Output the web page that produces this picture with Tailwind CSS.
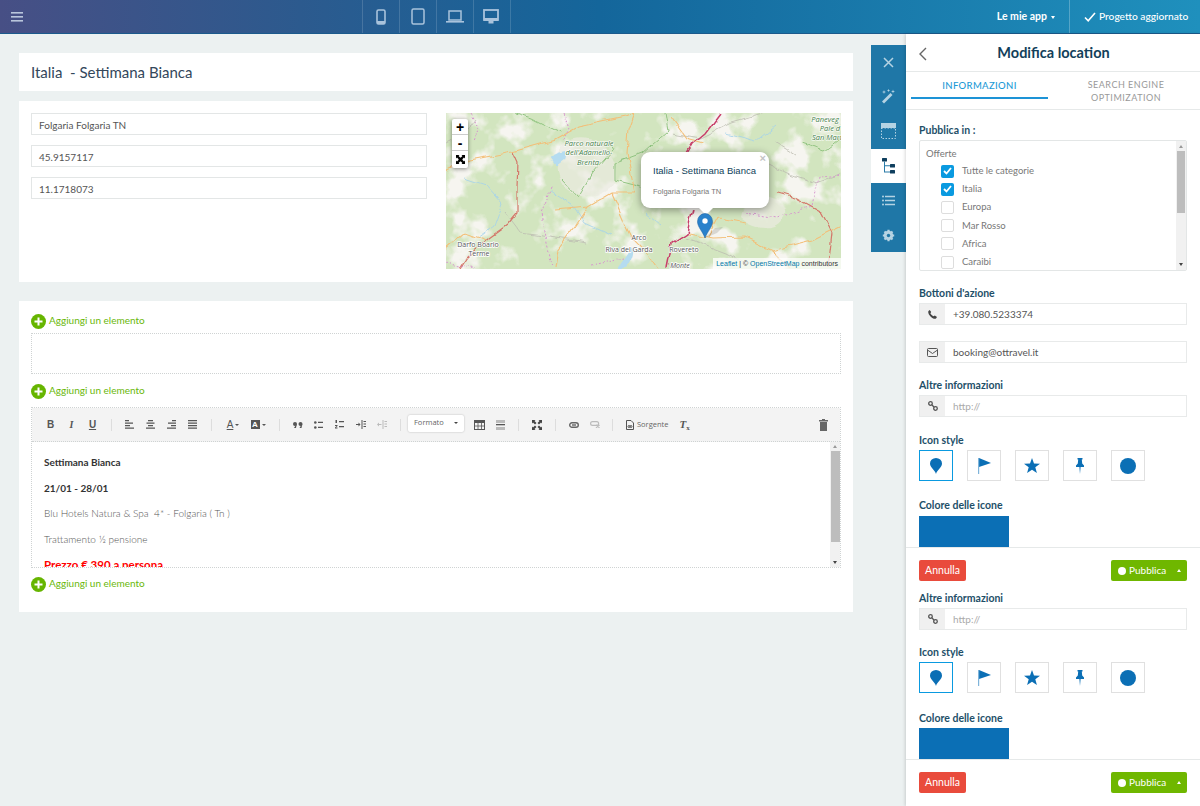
<!DOCTYPE html>
<html lang="it">
<head>
<meta charset="UTF-8">
<title>Modifica location</title>
<script src="https://cdn.jsdelivr.net/npm/@tailwindcss/browser@4"></script>
</head>
<body class="w-[1200px] h-[806px] overflow-hidden flex flex-col bg-[#ecf1f1] font-['Lato',sans-serif] text-[11px] text-[#555]">

<!-- top bar -->
<header class="h-[34px] shrink-0 flex items-stretch bg-[linear-gradient(90deg,#474f85,#2c5a8e_25%,#14669b_50%,#1f90bd)] border-b border-[#1b5a8c] text-white">
  <button class="w-[33px] pl-[11px] flex items-center">
    <svg width="12" height="10" viewBox="0 0 12 10" fill="#b9c6dc"><rect width="12" height="1.6"/><rect y="4" width="12" height="1.6"/><rect y="8" width="12" height="1.6"/></svg>
  </button>
  <div class="ml-[329px] flex border-l border-white/15">
    <div class="w-[37px] border-r border-white/15 flex items-center justify-center">
      <svg width="10" height="16" viewBox="0 0 10 16"><rect x="1" y="1" width="8" height="14" rx="1.5" fill="none" stroke="#a9c3dc" stroke-width="1.6"/><rect x="1" y="12" width="8" height="3" fill="#a9c3dc"/></svg>
    </div>
    <div class="w-[37px] border-r border-white/15 flex items-center justify-center">
      <svg width="14" height="17" viewBox="0 0 14 17"><rect x="1" y="1" width="12" height="15" rx="1.5" fill="none" stroke="#a9c3dc" stroke-width="1.5"/></svg>
    </div>
    <div class="w-[37px] border-r border-white/15 flex items-center justify-center">
      <svg width="18" height="13" viewBox="0 0 18 13"><rect x="3" y="1" width="12" height="9" fill="none" stroke="#a9c3dc" stroke-width="1.5"/><rect y="11" width="18" height="1.6" fill="#a9c3dc"/></svg>
    </div>
    <div class="w-[37px] border-r border-white/15 flex items-center justify-center pr-[2px]">
      <svg width="16" height="15" viewBox="0 0 16 15"><rect x="1" y="1" width="14" height="10" fill="none" stroke="#a9c3dc" stroke-width="1.8"/><rect x="1" y="9" width="14" height="3" fill="#a9c3dc"/><rect x="5.5" y="12" width="5" height="2.5" fill="#a9c3dc"/></svg>
    </div>
  </div>
  <div class="ml-auto flex items-center text-[10.500px] font-bold gap-[4px] pr-[14px]">
    Le mie app <span class="border-x-[2.5px] border-x-transparent border-t-[3px] border-t-white mt-px"></span>
  </div>
  <div class="w-[131px] border-l border-white/25 flex items-center pl-[14px] gap-[3px] text-[10.200px] font-medium whitespace-nowrap">
    <svg width="12" height="10" viewBox="0 0 12 10" fill="none" stroke="#fff" stroke-width="1.6"><path d="M1 5.5 4.2 8.8 11 1"/></svg>
    Progetto aggiornato
  </div>
</header>

<div class="flex-1 flex min-h-0">
  <!-- page column -->
  <main class="w-[871px] shrink-0 pl-[19px] pr-[18px] pt-[19px]">
    <div class="bg-white h-[38px] flex items-center px-[12px] text-[15px] text-[#33475b] whitespace-pre">Italia  - Settimana Bianca</div>

    <section class="bg-white mt-[10px] h-[181px] px-[12px] pt-[12px] flex">
      <div class="w-[396px] flex flex-col gap-[10px]">
        <div class="h-[22px] border border-[#e3e6e6] px-[7px] pt-[2px] flex items-center text-[10px] text-[#555]">Folgaria Folgaria TN</div>
        <div class="h-[22px] border border-[#e3e6e6] px-[7px] pt-[2px] flex items-center text-[10px] text-[#555]">45.9157117</div>
        <div class="h-[22px] border border-[#e3e6e6] px-[7px] pt-[2px] flex items-center text-[10px] text-[#555]">11.1718073</div>
      </div>
      <div class="relative ml-[19px] w-[395px] h-[156px] overflow-hidden bg-[#e4ead8]">
        <svg class="absolute inset-0" width="395" height="156" viewBox="0 0 395 156">
          <defs>
            <filter id="terrain" x="0" y="0" width="100%" height="100%">
              <feTurbulence type="fractalNoise" baseFrequency=".03" numOctaves="4" seed="7"/>
              <feColorMatrix type="matrix" values="0 0 0 0 .925  0 0 0 0 .915  0 0 0 0 .875  6 0 0 0 -3.100"/>
            </filter>
            <filter id="wiggle" x="-5%" y="-5%" width="110%" height="110%">
              <feTurbulence type="fractalNoise" baseFrequency=".07" numOctaves="2" seed="3" result="n"/>
              <feDisplacementMap in="SourceGraphic" in2="n" scale="7" xChannelSelector="R" yChannelSelector="G"/>
              <feGaussianBlur stdDeviation=".25"/>
            </filter>
          </defs>
          <rect width="395" height="156" fill="#d2e5bf"/>
          <rect width="395" height="156" filter="url(#terrain)"/>
          <g filter="url(#wiggle)">
            <g fill="#ecebe1" opacity=".7">
              <path d="M116 30C135 20 160 25 168 50S160 85 135 82 108 55 116 30Z"/>
              <path d="M300 85C320 78 345 88 338 105S305 115 295 105Z"/>
            </g>
            <g fill="#b5dcf0">
              <path d="M104 44 112 40 120 38 118 46 110 52Z"/>
              <path d="M186 134C189 140 186 148 180 156H172C177 148 182 142 186 134Z"/>
            </g>
            <g fill="none" stroke="#a3d2ec" stroke-width=".8">
              <path d="M18 65 40 72 56 90 48 112 30 125"/>
              <path d="M104 78 126 92 138 110 165 122"/>
              <path d="M280 20 310 28 330 12"/>
              <path d="M200 100 215 112"/>
            </g>
            <g fill="none" stroke="#bcbcb1" stroke-width=".8">
              <path d="M60 100 75 120 110 125 140 130"/>
              <path d="M225 20 255 25 285 10 320 0"/>
              <path d="M240 125 280 140 310 156"/>
              <path d="M300 40 340 60 370 70 395 60"/>
              <path d="M0 30 20 20 30 5"/>
              <path d="M330 30 350 42"/>
            </g>
            <g fill="none" stroke="#92c482" stroke-width="1">
              <path d="M219 0 222 17 196 40 169 50 169 67 196 74"/>
              <path d="M116 67 132 84 146 60 166 37 162 30"/>
              <path d="M115 20 85 5 70 0"/>
              <path d="M355 30 378 38 395 25"/>
            </g>
            <g fill="none" stroke="#f3bf78" stroke-width="1.100">
              <path d="M0 58 24 47 66 39 109 27 132 14 179 4 189 0"/>
              <path d="M109 97 142 94 166 80 189 80 181 40 183 17 189 0"/>
              <path d="M142 94 129 114 112 137 109 156"/>
              <path d="M166 80 179 110 186 124 199 137 212 156"/>
              <path d="M242 120 266 125 299 124 326 137 366 127 396 112"/>
              <path d="M262 124 272 105 300 110"/>
              <path d="M225 4 240 25 258 30"/>
              <path d="M345 156 326 137"/>
              <path d="M0 135 18 120 40 128"/>
            </g>
            <g fill="none" stroke="#d4776a" stroke-width="1.200">
              <path d="M67 39 72 50 71 74 71 100 61 112 43 125 22 144 14 156"/>
              <path d="M332 80 349 85 376 100 386 120 382 155"/>
            </g>
            <path d="M274 0 259 20 247 30 241 40M247 95 241 120 226 130 221 155" fill="none" stroke="#c83f6a" stroke-width="1.500"/>
            <g fill="none" stroke="#d795cf" stroke-width="1" stroke-dasharray="2 2">
              <path d="M118 0 124 15 116 28"/>
              <path d="M105 75 95 100 100 130 106 156"/>
              <path d="M301 100 332 105 366 94 372 64 396 62"/>
              <path d="M0 150 28 156"/>
              <path d="M145 152 178 146"/>
              <path d="M25 0 33 14 28 28"/>
            </g>
          </g>
          <g font-family="'Open Sans',sans-serif" font-size="7" fill="#555" text-anchor="middle" stroke="#ffffff" stroke-width="1.500" paint-order="stroke">
            <text x="32" y="134">Darfo Boario</text>
            <text x="33" y="143">Terme</text>
            <text x="193" y="127">Arco</text>
            <text x="183" y="139">Riva del Garda</text>
            <text x="238" y="139">Rovereto</text>
            <text x="234" y="155" font-style="italic">Monte</text>
          </g>
          <g font-family="'Open Sans',sans-serif" font-size="7.5" fill="#3f7d45" font-style="italic" text-anchor="middle" stroke="#ffffff" stroke-width="1.200" paint-order="stroke">
            <text x="143" y="33">Parco naturale</text>
            <text x="143" y="42">dell'Adamello-</text>
            <text x="142" y="52">Brenta</text>
            <text x="379" y="9">Paneveg</text>
            <text x="384" y="18">Pale d</text>
            <text x="381" y="27">San Mart</text>
          </g>
        </svg>

        <!-- zoom controls -->
        <div class="absolute left-[6px] top-[6px] w-[16px] bg-white rounded-[2px] shadow-[0_1px_4px_rgba(0,0,0,.45)] flex flex-col font-['Liberation_Sans',sans-serif]">
          <div class="h-[16px] flex items-center justify-center border-b border-[#ccc] font-bold text-[14px] leading-none text-black">+</div>
          <div class="h-[16px] flex items-center justify-center border-b border-[#ccc] font-bold text-[14px] leading-none text-black">-</div>
          <div class="h-[17px] flex items-center justify-center">
            <svg width="9" height="9" viewBox="0 0 9 9"><path d="M0 0H3.5L2.6 1 4.5 3 6.4 1 5.5 0H9V3.500L8 2.600 6 4.500 8 6.400 9 5.500V9H5.500L6.400 8 4.500 6 2.600 8 3.500 9H0V5.500L1 6.400 3 4.500 1 2.600 0 3.500Z" fill="#000"/><rect x="2.700" y="2.700" width="3.600" height="3.600" fill="#000"/></svg>
          </div>
        </div>

        <!-- popup and marker -->
        <div class="absolute left-[195px] top-[39px] w-[128px] h-[56px] bg-white rounded-[9px] shadow-[0_2px_8px_rgba(0,0,0,.4)] px-[12px] pt-[12px] font-['Liberation_Sans',sans-serif]">
          <span class="absolute right-[3px] top-[1px] text-[#c3c3c3] text-[11px] font-bold leading-none">×</span>
          <div class="text-[9.500px] leading-[14px] text-[#0f3f5a] whitespace-nowrap">Italia - Settimana Bianca</div>
          <div class="text-[7.500px] leading-[10px] mt-[9px] text-[#777] whitespace-nowrap">Folgaria Folgaria TN</div>
        </div>
        <div class="absolute left-[253px] top-[95px] w-0 h-0 border-x-[7px] border-x-transparent border-t-[7px] border-t-white"></div>
        <svg class="absolute left-[249px] top-[100px]" width="30" height="26" viewBox="0 0 30 26">
          <path d="M10 25 20 15 28 14 22 20Z" fill="#000" opacity=".12"/>
          <path d="M10 25C8 19 2.500 14 2.500 8.500A7.500 8 0 0 1 17.500 8.500C17.500 14 12 19 10 25Z" fill="#2a81cb" stroke="#2368a6" stroke-width=".6"/>
          <circle cx="10" cy="8" r="2.700" fill="#fff"/>
        </svg>

        <div class="absolute right-0 bottom-0 h-[11px] px-[3px] bg-white/75 text-[7px] leading-[11px] text-[#333] whitespace-nowrap font-['Liberation_Sans',sans-serif]">
          <span class="text-[#0078a8]">Leaflet</span> | © <span class="text-[#0078a8]">OpenStreetMap</span> contributors
        </div>
      </div>
    </section>

    <section class="bg-white mt-[19px] h-[311px] px-[12px] pt-[12px]">
      <div class="h-[16px] flex items-center gap-[3px] text-[#6ab80a] text-[10px]">
        <svg width="15" height="15" viewBox="0 0 15 15"><circle cx="7.500" cy="7.500" r="7.500" fill="#66b500"/><path d="M7.500 3.500V11.500M3.500 7.500H11.500" stroke="#fff" stroke-width="2"/></svg>
        <span class="pb-px">Aggiungi un elemento</span>
      </div>
      <div class="mt-[4px] h-[41px] border border-dotted border-[#cfd3d3]"></div>
      <div class="mt-[9px] h-[16px] flex items-center gap-[3px] text-[#6ab80a] text-[10px]">
        <svg width="15" height="15" viewBox="0 0 15 15"><circle cx="7.500" cy="7.500" r="7.500" fill="#66b500"/><path d="M7.500 3.500V11.500M3.500 7.500H11.500" stroke="#fff" stroke-width="2"/></svg>
        <span class="pb-px">Aggiungi un elemento</span>
      </div>

      <!-- text editor -->
      <div class="mt-[8px] h-[161px] border border-dotted border-[#cfd3d3] flex flex-col">
        <div class="h-[34px] shrink-0 bg-[#f3f3f3] border-b border-dotted border-[#cfd3d3] flex items-center pl-[8px] pr-[12px] text-[#555]">
          <span class="w-[21px] text-center font-bold text-[10px] font-['Liberation_Sans',sans-serif]">B</span>
          <span class="w-[21px] text-center font-bold italic text-[10px] font-['Liberation_Serif',serif]">I</span>
          <span class="w-[21px] text-center font-bold underline text-[10px] font-['Liberation_Sans',sans-serif]">U</span>
          <span class="w-[16px] flex justify-center"><i class="block w-px h-[12px] bg-[#ddd]"></i></span>
          <span class="w-[21px] flex justify-center"><svg width="9" height="9" viewBox="0 0 9 9" fill="#555"><path d="M0 0H4V1.300H0ZM0 2.500H8V3.800H0ZM0 5H5V6.300H0ZM0 7.500H9V8.800H0Z"/></svg></span>
          <span class="w-[21px] flex justify-center"><svg width="9" height="9" viewBox="0 0 9 9" fill="#555"><path d="M2 0H7V1.300H2ZM.5 2.500H8.500V3.800H.5ZM2 5H7V6.300H2ZM0 7.500H9V8.800H0Z"/></svg></span>
          <span class="w-[21px] flex justify-center"><svg width="9" height="9" viewBox="0 0 9 9" fill="#555"><path d="M5 0H9V1.300H5ZM1 2.500H9V3.800H1ZM4 5H9V6.300H4ZM0 7.500H9V8.800H0Z"/></svg></span>
          <span class="w-[21px] flex justify-center"><svg width="9" height="9" viewBox="0 0 9 9" fill="#555"><path d="M0 0H9V1.300H0ZM0 2.500H9V3.800H0ZM0 5H9V6.300H0ZM0 7.500H9V8.800H0Z"/></svg></span>
          <span class="w-[16px] flex justify-center"><i class="block w-px h-[12px] bg-[#ddd]"></i></span>
          <span class="w-[26px] flex items-center justify-center gap-[2px] pl-[2px]"><span class="text-[10px] leading-[10px] underline font-['Liberation_Sans',sans-serif]">A</span><i class="border-x-[2px] border-x-transparent border-t-[2px] border-t-[#555]"></i></span>
          <span class="w-[26px] flex items-center justify-center gap-[2px]"><span class="w-[9px] h-[9px] bg-[#555] text-white text-[8px] leading-[9px] text-center font-bold font-['Liberation_Sans',sans-serif]">A</span><i class="border-x-[2px] border-x-transparent border-t-[2px] border-t-[#555]"></i></span>
          <span class="w-[16px] flex justify-center"><i class="block w-px h-[12px] bg-[#ddd]"></i></span>
          <span class="w-[21px] flex justify-center"><svg width="10" height="6" viewBox="0 0 10 6" fill="#555"><circle cx="2" cy="2" r="2"/><path d="M2.500 3.500 3.800 2 3 6 1 6Z"/><circle cx="7.500" cy="2" r="2"/><path d="M8 3.500 9.300 2 8.500 6 6.500 6Z"/></svg></span>
          <span class="w-[21px] flex justify-center"><svg width="9" height="8" viewBox="0 0 9 8" fill="#555"><circle cx="1.300" cy="1.500" r="1.300"/><circle cx="1.300" cy="6.500" r="1.300"/><path d="M4 .8H9V2.100H4ZM4 5.800H9V7.100H4Z"/></svg></span>
          <span class="w-[21px] flex justify-center"><svg width="9" height="9" viewBox="0 0 9 9" fill="#555"><path d="M.5 0H2V3H.5ZM0 5H2.500V6L1 7.500H2.500V8.500H0V7.500L1.500 6H0ZM4 1H9V2.300H4ZM4 6H9V7.300H4Z"/></svg></span>
          <span class="w-[21px] flex justify-center"><svg width="10" height="9" viewBox="0 0 10 9" fill="#555"><path d="M5.500 0H6.500V9H5.500ZM7.500 1H10V2H7.500ZM7.500 3.500H10V4.500H7.500ZM7.500 6H10V7H7.500ZM0 4H2.500V2.500L4.500 4.500 2.500 6.500V5H0Z"/></svg></span>
          <span class="w-[21px] flex justify-center"><svg width="10" height="9" viewBox="0 0 10 9" fill="#bbb"><path d="M5.500 0H6.500V9H5.500ZM7.500 1H10V2H7.500ZM7.500 3.500H10V4.500H7.500ZM7.500 6H10V7H7.500ZM4.500 4H2V2.500L0 4.500 2 6.500V5H4.500Z"/></svg></span>
          <span class="w-[16px] flex justify-center"><i class="block w-px h-[12px] bg-[#ddd]"></i></span>
          <span class="w-[56px] h-[17px] mt-[-3px] bg-white rounded-[2px] shadow-[0_0_2px_rgba(0,0,0,.25)] flex items-center justify-between px-[6px] text-[7.500px] text-[#666] font-['Open_Sans',sans-serif]">Formato<i class="border-x-[2px] border-x-transparent border-t-[2px] border-t-[#444]"></i></span>
          <span class="w-[21px] ml-[5px] flex justify-center"><svg width="11" height="10" viewBox="0 0 11 10"><rect x=".5" y=".5" width="10" height="9" fill="none" stroke="#555"/><rect width="11" height="3" fill="#555"/><path d="M0 6H11M4 3V10M7.500 3V10" stroke="#555" stroke-width=".8"/></svg></span>
          <span class="w-[21px] flex justify-center"><svg width="9" height="10" viewBox="0 0 9 10"><rect width="9" height="3" fill="#bbb"/><rect y="4" width="9" height="1.300" fill="#555"/><rect y="7" width="9" height="3" fill="#bbb"/></svg></span>
          <span class="w-[15px] flex justify-center"><i class="block w-px h-[12px] bg-[#ddd]"></i></span>
          <span class="w-[22px] flex justify-center"><svg width="10" height="10" viewBox="0 0 10 10" fill="#444"><path d="M0 0H3.500L2.500 1 4.500 3 3 4.500 1 2.500 0 3.500ZM10 0V3.500L9 2.500 7 4.500 5.500 3 7.500 1 6.500 0ZM0 10V6.500L1 7.500 3 5.500 4.500 7 2.500 9 3.500 10ZM10 10H6.500L7.500 9 5.500 7 7 5.500 9 7.500 10 6.500Z"/></svg></span>
          <span class="w-[15px] flex justify-center"><i class="block w-px h-[12px] bg-[#ddd]"></i></span>
          <span class="w-[21px] flex justify-center"><svg width="10" height="6" viewBox="0 0 10 6"><rect x=".7" y=".7" width="8.600" height="4.600" rx="2.300" fill="none" stroke="#666" stroke-width="1.400"/><rect x="3" y="2.300" width="4" height="1.400" fill="#666"/></svg></span>
          <span class="w-[21px] flex justify-center"><svg width="10" height="7" viewBox="0 0 10 7" fill="none" stroke="#bbb" stroke-width="1.200"><rect x=".6" y=".6" width="8" height="3.800" rx="1.900"/><path d="M6 4 9.500 6.800M9.500 4 6 6.800"/></svg></span>
          <span class="w-[15px] flex justify-center"><i class="block w-px h-[12px] bg-[#ddd]"></i></span>
          <span class="flex items-center gap-[3px] text-[7.500px] text-[#666] font-['Open_Sans',sans-serif] ml-[6px]"><svg width="8" height="10" viewBox="0 0 8 10" fill="none" stroke="#555"><path d="M.5 .5H5L7.500 3V9.500H.5Z"/><circle cx="3" cy="6.500" r="1"/><circle cx="5" cy="6.500" r="1"/></svg>Sorgente</span>
          <span class="ml-[11px] w-[12px] font-['Liberation_Serif',serif] italic font-bold text-[11px] text-[#555] leading-none">T<sub class="text-[7px] not-italic">x</sub></span>
          <svg class="ml-auto" width="9" height="12" viewBox="0 0 9 12" fill="#666"><rect y="1" width="9" height="1.500"/><rect x="3" width="3" height="1.500"/><rect x="1" y="3" width="7" height="9"/></svg>
        </div>
        <div class="flex-1 min-h-0 flex">
          <div class="flex-1 overflow-hidden pl-[12px] pt-[13px] text-[10px] leading-[14px] text-[#555]">
            <p class="font-bold text-[#333]">Settimana Bianca</p>
            <p class="font-bold text-[#333] mt-[11.500px]">21/01 - 28/01</p>
            <p class="mt-[11.500px] whitespace-pre font-light">Blu Hotels Natura &amp; Spa  4* - Folgaria ( Tn )</p>
            <p class="mt-[11.500px] font-light">Trattamento ½ pensione</p>
            <p class="mt-[12px] font-bold text-[11.500px] text-[#f00]">Prezzo € 390 a persona</p>
          </div>
          <div class="w-[10px] bg-[#f1f1f1] flex flex-col items-center">
            <i class="mt-[3px] border-x-[2px] border-x-transparent border-b-[3px] border-b-[#999]"></i>
            <i class="mt-[3px] w-[9px] h-[91px] bg-[#bdbdbd]"></i>
            <i class="mt-auto mb-[3px] border-x-[2.500px] border-x-transparent border-t-[3px] border-t-[#444]"></i>
          </div>
        </div>
      </div>

      <div class="mt-[8px] h-[16px] flex items-center gap-[3px] text-[#6ab80a] text-[10px]">
        <svg width="15" height="15" viewBox="0 0 15 15"><circle cx="7.500" cy="7.500" r="7.500" fill="#66b500"/><path d="M7.500 3.500V11.500M3.500 7.500H11.500" stroke="#fff" stroke-width="2"/></svg>
        <span class="pb-px">Aggiungi un elemento</span>
      </div>
    </section>
  </main>

  <!-- tool rail -->
  <nav class="w-[35px] shrink-0 pt-[11px]">
    <div class="bg-[#1f77a7] flex flex-col">
      <div class="h-[34.500px] flex items-center justify-center"><svg width="11" height="11" viewBox="0 0 11 11" stroke="#b5d3e3" stroke-width="1.500"><path d="M1 1 10 10M10 1 1 10"/></svg></div>
      <div class="h-[34.500px] flex items-center justify-center"><svg width="15" height="15" viewBox="0 0 15 15" fill="#b5d3e3"><path d="M1 12.500 9.500 4 11.500 6 3 14.500Z"/><path d="M3 1 3.500 2.500 5 3 3.500 3.500 3 5 2.500 3.500 1 3 2.500 2.500ZM12 .5 12.500 2 14 2.500 12.500 3 12 4.500 11.500 3 10 2.500 11.500 2ZM7.500 0 8 1 9 1.500 8 2 7.500 3 7 2 6 1.500 7 1Z"/></svg></div>
      <div class="h-[34.500px] flex items-center justify-center"><svg width="15" height="16" viewBox="0 0 15 16"><rect width="15" height="5" fill="#b5d3e3"/><rect x=".5" y="5" width="14" height="10.500" fill="none" stroke="#b5d3e3" stroke-dasharray="1.500 1.500"/></svg></div>
      <div class="h-[34.500px] bg-white flex items-center justify-center"><svg width="13" height="16" viewBox="0 0 13 16" fill="#0f3f5e"><rect width="5" height="3.500" rx=".5"/><rect x="8" y="6" width="5" height="3.500" rx=".5"/><rect x="8" y="12" width="5" height="3.500" rx=".5"/><path d="M2 3.500H3V13.500H8V14.500H2ZM3 7.300H8V8.300H3Z" fill="#2a7ba8"/></svg></div>
      <div class="h-[34.500px] flex items-center justify-center"><svg width="13" height="11" viewBox="0 0 13 11" fill="#b5d3e3"><circle cx="1" cy="1.500" r="1"/><circle cx="1" cy="5.500" r="1"/><circle cx="1" cy="9.500" r="1"/><path d="M3 .8H13V2.200H3ZM3 4.800H13V6.200H3ZM3 8.800H13V10.200H3Z"/></svg></div>
      <div class="h-[34.500px] flex items-center justify-center pt-[2px]"><svg width="13" height="13" viewBox="0 0 13 13"><circle cx="6.500" cy="6.500" r="3.500" fill="none" stroke="#b5d3e3" stroke-width="2.500"/><path d="M6.500 .8V12.200M.8 6.500H12.200M2.500 2.500 10.500 10.500M10.500 2.500 2.500 10.500" stroke="#b5d3e3" stroke-width="2.200"/><circle cx="6.500" cy="6.500" r="1.700" fill="#1f77a7"/></svg></div>
    </div>
  </nav>

  <!-- side panel -->
  <aside class="w-[294px] shrink-0 bg-white shadow-[-1px_0_3px_rgba(0,0,0,.15)] overflow-hidden">
    <div class="h-[38px] border-b border-[#e6e9e9] relative flex items-center justify-center">
      <svg class="absolute left-[13px] top-[13px]" width="8" height="14" viewBox="0 0 8 14" fill="none" stroke="#666" stroke-width="1.400"><path d="M7 1 1 7 7 13"/></svg>
      <span class="text-[14.500px] font-bold text-[#123f5a] ml-[1px]">Modifica location</span>
    </div>
    <div class="h-[38px] border-b border-[#e6e9e9] flex pl-[5px] pr-[6px]">
      <div class="w-[137px] h-[27px] border-b-2 border-[#1d93d6] text-[#1d9ad6] text-[9.500px] tracking-[.35px] text-center pt-[7px] leading-[13px] font-medium">INFORMAZIONI</div>
      <div class="flex-1 text-[#999] text-[9px] tracking-[.5px] leading-[12.500px] text-center pt-[7px] pl-[10px]">SEARCH ENGINE<br>OPTIMIZATION</div>
    </div>

    <div class="px-[13px] pt-[13px]">
      <label class="block h-[15px] leading-[15px] text-[10.500px] font-bold text-[#1e4f68]">Pubblica in :</label>
      <div class="mt-[2px] h-[131px] border border-[#e3e6e6] rounded-[2px] flex overflow-hidden">
        <div class="flex-1 pl-[6px] pt-[5px] text-[9.500px] text-[#777] overflow-hidden">
          <div class="h-[15px] leading-[15px]">Offerte</div>
          <div class="pl-[15px] mt-[1px]">
            <div class="h-[18.200px] flex items-center gap-[8px]"><span class="w-[13px] h-[13px] rounded-[2px] bg-[#0a9ae0] flex items-center justify-center"><svg width="9" height="8" viewBox="0 0 9 8" fill="none" stroke="#fff" stroke-width="1.800"><path d="M1 4 3.500 6.500 8 1"/></svg></span>Tutte le categorie</div>
            <div class="h-[18.200px] flex items-center gap-[8px]"><span class="w-[13px] h-[13px] rounded-[2px] bg-[#0a9ae0] flex items-center justify-center"><svg width="9" height="8" viewBox="0 0 9 8" fill="none" stroke="#fff" stroke-width="1.800"><path d="M1 4 3.500 6.500 8 1"/></svg></span>Italia</div>
            <div class="h-[18.200px] flex items-center gap-[8px]"><span class="w-[13px] h-[13px] rounded-[2px] border border-[#ddd]"></span>Europa</div>
            <div class="h-[18.200px] flex items-center gap-[8px]"><span class="w-[13px] h-[13px] rounded-[2px] border border-[#ddd]"></span>Mar Rosso</div>
            <div class="h-[18.200px] flex items-center gap-[8px]"><span class="w-[13px] h-[13px] rounded-[2px] border border-[#ddd]"></span>Africa</div>
            <div class="h-[18.200px] flex items-center gap-[8px]"><span class="w-[13px] h-[13px] rounded-[2px] border border-[#ddd]"></span>Caraibi</div>
          </div>
        </div>
        <div class="w-[10px] bg-[#f1f1f1] flex flex-col items-center">
          <i class="mt-[4px] border-x-[2px] border-x-transparent border-b-[3px] border-b-[#999]"></i>
          <i class="mt-[3px] w-[8px] h-[62px] bg-[#bdbdbd]"></i>
          <i class="mt-auto mb-[4px] border-x-[2.500px] border-x-transparent border-t-[3px] border-t-[#444]"></i>
        </div>
      </div>

      <label class="block mt-[15px] h-[15px] leading-[15px] text-[10.500px] font-bold text-[#1e4f68]">Bottoni d'azione</label>
      <div class="mt-[2px] h-[22px] border border-[#e8eaea] flex items-stretch text-[10px] text-[#555]">
        <span class="w-[25px] bg-[#f0f0f0] flex items-center justify-center"><svg width="9" height="9" viewBox="0 0 9 9" fill="#444"><path d="M1.700 0 3.200 2 2.400 3.200C3 4.500 4.300 5.800 5.600 6.300L6.800 5.500 9 7 8 8.500C7 9.300 4.500 8.700 2.500 6.500.5 4.500-.2 2 .5 1Z"/></svg></span>
        <span class="pl-[8px] pt-px flex items-center">+39.080.5233374</span>
      </div>
      <div class="mt-[16px] h-[22px] border border-[#e8eaea] flex items-stretch text-[10px] text-[#555]">
        <span class="w-[25px] bg-[#f0f0f0] flex items-center justify-center"><svg width="11" height="9" viewBox="0 0 11 9" fill="none" stroke="#555"><rect x=".5" y=".5" width="10" height="8" rx="1"/><path d="M.5 2 5.500 5.500 10.500 2"/></svg></span>
        <span class="pl-[8px] pt-px flex items-center">booking@ottravel.it</span>
      </div>

      <label class="block mt-[15px] h-[15px] leading-[15px] text-[10.500px] font-bold text-[#1e4f68]">Altre informazioni</label>
      <div class="mt-[2px] h-[22px] border border-[#e8eaea] flex items-stretch text-[10px] text-[#aaa]">
        <span class="w-[25px] bg-[#f0f0f0] flex items-center justify-center"><svg width="10" height="10" viewBox="0 0 10 10" fill="none" stroke="#555" stroke-width="1.300"><circle cx="2.500" cy="2.500" r="1.800"/><circle cx="7.500" cy="7.500" r="1.800"/><path d="M3.800 3.800 6.200 6.200"/></svg></span>
        <span class="pl-[8px] pt-px flex items-center">http://</span>
      </div>

      <label class="block mt-[16px] h-[15px] leading-[15px] text-[10.500px] font-bold text-[#1e4f68]">Icon style</label>
      <div class="mt-[2px] flex gap-[14px]">
        <div class="w-[34px] h-[31px] border border-[#0a9ae0] flex items-center justify-center"><svg width="12" height="16" viewBox="0 0 12 16" fill="#0b6fb5"><path d="M6 16C5 12 0 9.500 0 5.500A6 5.500 0 0 1 12 5.500C12 9.500 7 12 6 16Z"/></svg></div>
        <div class="w-[34px] h-[31px] border border-[#e0e0e0] flex items-center justify-center"><svg width="13" height="16" viewBox="0 0 13 16"><path d="M1 0 13 5 1 9Z" fill="#0b6fb5"/><rect y="0" width="1.200" height="16" fill="#7fb4da"/></svg></div>
        <div class="w-[34px] h-[31px] border border-[#e0e0e0] flex items-center justify-center"><svg width="16" height="15" viewBox="0 0 16 15" fill="#0b6fb5"><path d="M8 0 10 5.400 16 5.700 11.300 9.300 12.900 15 8 11.800 3.100 15 4.700 9.300 0 5.700 6 5.400Z"/></svg></div>
        <div class="w-[34px] h-[31px] border border-[#e0e0e0] flex items-center justify-center"><svg width="8" height="16" viewBox="0 0 8 16" fill="#0b6fb5"><path d="M1.500 0H6.500V1.500H5.800L6.200 5.500 8 7.500V9H4.600L4 16 3.400 9H0V7.500L1.800 5.500 2.200 1.500H1.500Z"/></svg></div>
        <div class="w-[34px] h-[31px] border border-[#e0e0e0] flex items-center justify-center"><span class="w-[16px] h-[16px] rounded-full bg-[#0b6fb5]"></span></div>
      </div>

      <label class="block mt-[17px] h-[15px] leading-[15px] text-[10.500px] font-bold text-[#1e4f68]">Colore delle icone</label>
      <div class="mt-[3px] w-[90px] h-[31px] bg-[#0b6fb5]"></div>
    </div>

    <div class="h-[45px] border-t border-[#e6e9e9] px-[13px] pt-[12px] flex justify-between items-start">
      <button class="w-[47px] h-[21px] rounded-[2px] bg-[#e94b3c] text-white text-[10.500px] leading-[21px] text-center">Annulla</button>
      <button class="w-[76px] h-[21px] rounded-[2px] bg-[#6fb700] text-white text-[10px] flex items-center pl-[7px] gap-[3px]"><i class="w-[8px] h-[8px] rounded-full bg-white"></i>Pubblica<i class="ml-auto mr-[6px] border-x-[2.500px] border-x-transparent border-b-[3px] border-b-white"></i></button>
    </div>

    <div class="px-[13px]">
      <label class="block h-[15px] leading-[15px] text-[10.500px] font-bold text-[#1e4f68] mt-[-1px]">Altre informazioni</label>
      <div class="mt-[2px] h-[22px] border border-[#e8eaea] flex items-stretch text-[10px] text-[#aaa]">
        <span class="w-[25px] bg-[#f0f0f0] flex items-center justify-center"><svg width="10" height="10" viewBox="0 0 10 10" fill="none" stroke="#555" stroke-width="1.300"><circle cx="2.500" cy="2.500" r="1.800"/><circle cx="7.500" cy="7.500" r="1.800"/><path d="M3.800 3.800 6.200 6.200"/></svg></span>
        <span class="pl-[8px] pt-px flex items-center">http://</span>
      </div>

      <label class="block mt-[15px] h-[15px] leading-[15px] text-[10.500px] font-bold text-[#1e4f68]">Icon style</label>
      <div class="mt-[2px] flex gap-[14px]">
        <div class="w-[34px] h-[31px] border border-[#0a9ae0] flex items-center justify-center"><svg width="12" height="16" viewBox="0 0 12 16" fill="#0b6fb5"><path d="M6 16C5 12 0 9.500 0 5.500A6 5.500 0 0 1 12 5.500C12 9.500 7 12 6 16Z"/></svg></div>
        <div class="w-[34px] h-[31px] border border-[#e0e0e0] flex items-center justify-center"><svg width="13" height="16" viewBox="0 0 13 16"><path d="M1 0 13 5 1 9Z" fill="#0b6fb5"/><rect y="0" width="1.200" height="16" fill="#7fb4da"/></svg></div>
        <div class="w-[34px] h-[31px] border border-[#e0e0e0] flex items-center justify-center"><svg width="16" height="15" viewBox="0 0 16 15" fill="#0b6fb5"><path d="M8 0 10 5.400 16 5.700 11.300 9.300 12.900 15 8 11.800 3.100 15 4.700 9.300 0 5.700 6 5.400Z"/></svg></div>
        <div class="w-[34px] h-[31px] border border-[#e0e0e0] flex items-center justify-center"><svg width="8" height="16" viewBox="0 0 8 16" fill="#0b6fb5"><path d="M1.500 0H6.500V1.500H5.800L6.200 5.500 8 7.500V9H4.600L4 16 3.400 9H0V7.500L1.800 5.500 2.200 1.500H1.500Z"/></svg></div>
        <div class="w-[34px] h-[31px] border border-[#e0e0e0] flex items-center justify-center"><span class="w-[16px] h-[16px] rounded-full bg-[#0b6fb5]"></span></div>
      </div>

      <label class="block mt-[18px] h-[15px] leading-[15px] text-[10.500px] font-bold text-[#1e4f68]">Colore delle icone</label>
      <div class="mt-[2px] w-[90px] h-[31px] bg-[#0b6fb5]"></div>
    </div>

    <div class="h-[45px] border-t border-[#e6e9e9] px-[13px] pt-[12px] flex justify-between items-start">
      <button class="w-[47px] h-[21px] rounded-[2px] bg-[#e94b3c] text-white text-[10.500px] leading-[21px] text-center">Annulla</button>
      <button class="w-[76px] h-[21px] rounded-[2px] bg-[#6fb700] text-white text-[10px] flex items-center pl-[7px] gap-[3px]"><i class="w-[8px] h-[8px] rounded-full bg-white"></i>Pubblica<i class="ml-auto mr-[6px] border-x-[2.500px] border-x-transparent border-b-[3px] border-b-white"></i></button>
    </div>
  </aside>
</div>
</body>
</html>
